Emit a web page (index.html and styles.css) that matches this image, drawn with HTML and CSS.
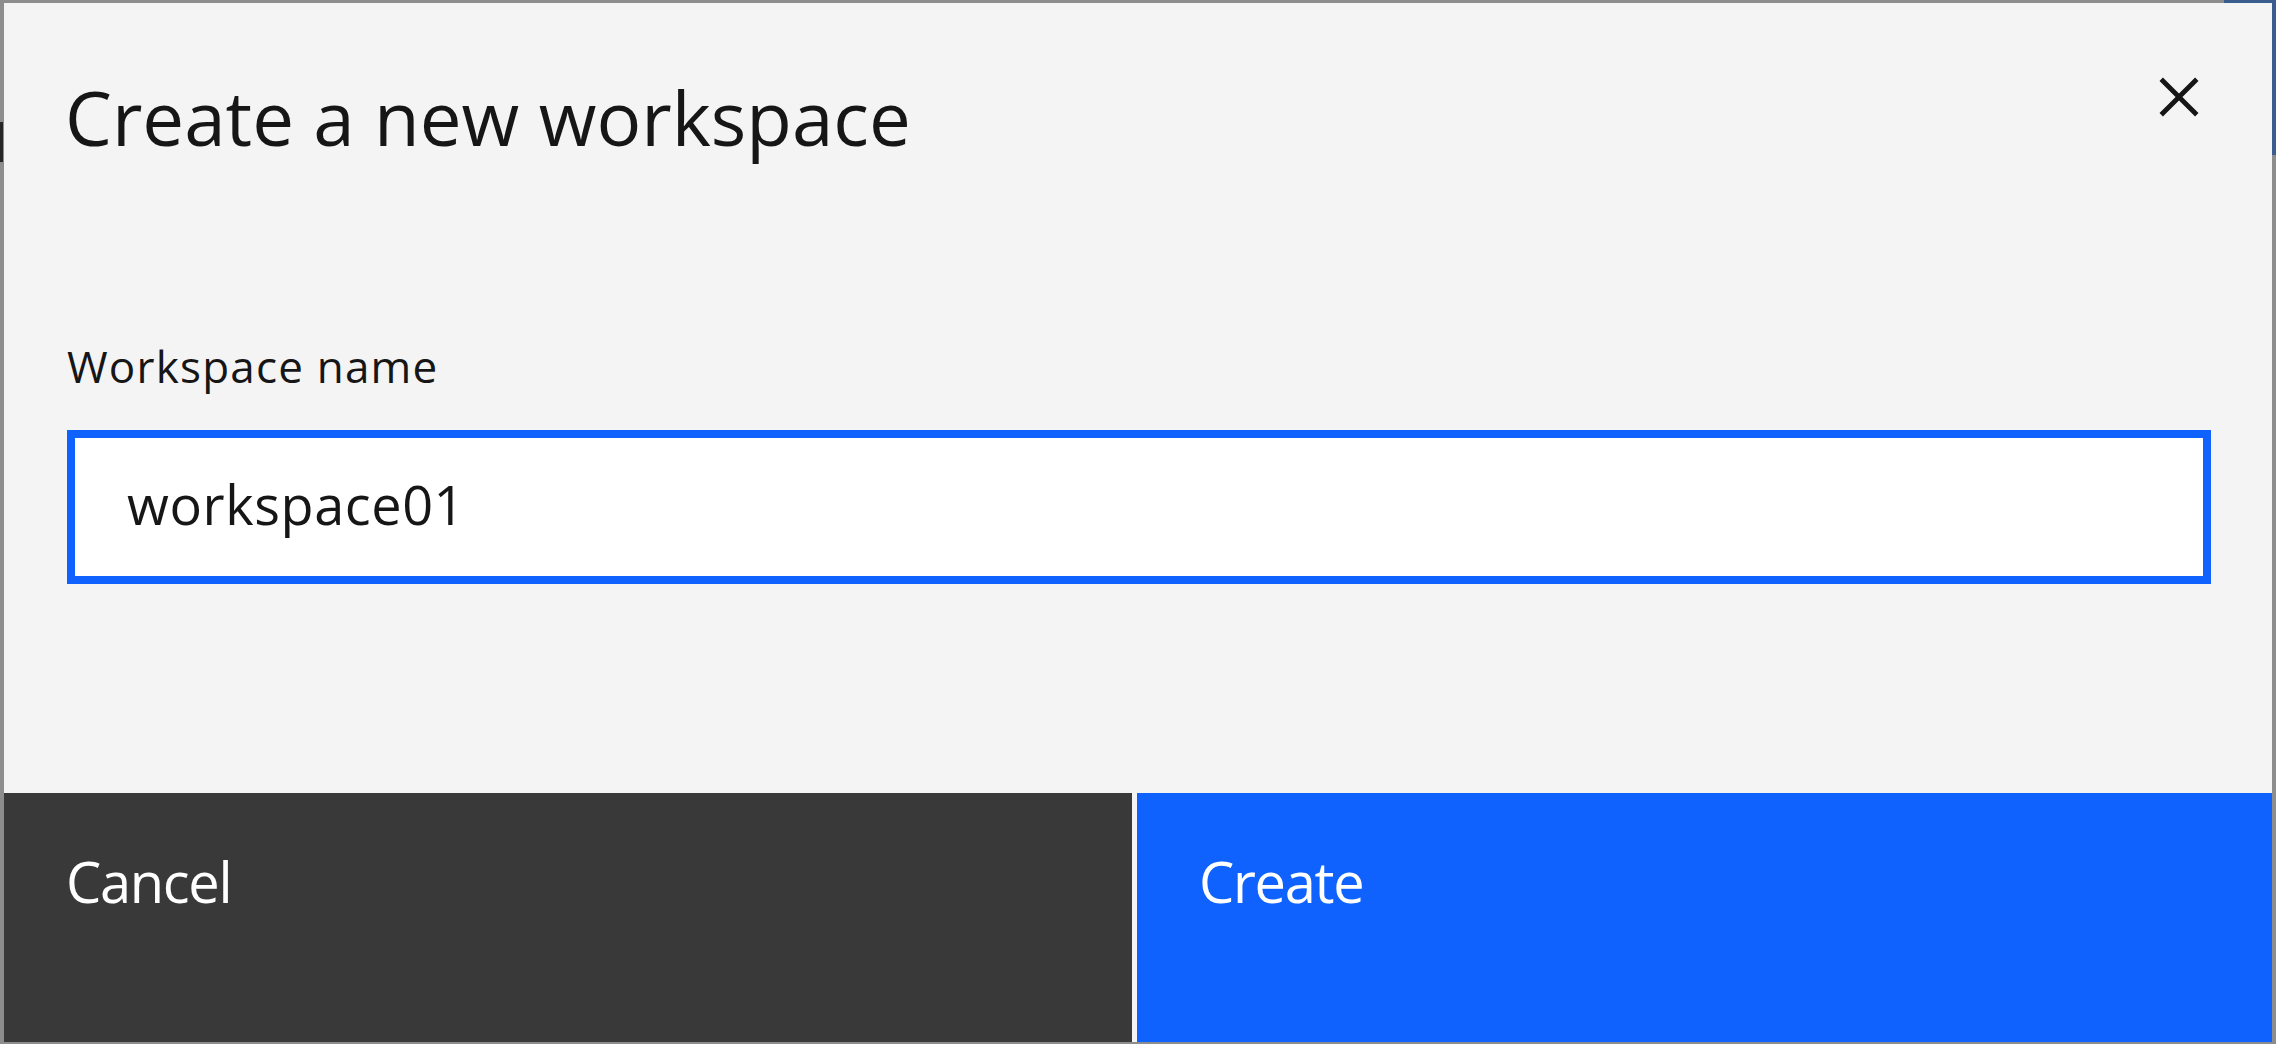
FILE: index.html
```html
<!DOCTYPE html>
<html lang="en">
<head>
<meta charset="utf-8">
<title>Create a new workspace</title>
<link rel="stylesheet" href="styles.css">
</head>
<body>
<div class="modal" role="dialog" aria-labelledby="modal-title">
  <div class="modal-header">
    <h2 class="modal-title" id="modal-title">Create a new workspace</h2>
    <button class="modal-close" type="button" aria-label="Close">
      <svg class="close-icon" viewBox="0 0 32 32" width="78" height="78" aria-hidden="true">
        <polygon points="24 9.4 22.6 8 16 14.6 9.4 8 8 9.4 14.6 16 8 22.6 9.4 24 16 17.4 22.6 24 24 22.6 17.4 16 24 9.4" fill="#161616"/>
      </svg>
    </button>
  </div>
  <div class="modal-body">
    <label class="field-label" for="ws-name">Workspace name</label>
    <input class="field-input" id="ws-name" type="text" value="workspace01">
  </div>
  <div class="modal-footer">
    <button class="btn btn-secondary" type="button"><span class="btn-text">Cancel</span></button>
    <button class="btn btn-primary" type="button"><span class="btn-text">Create</span></button>
  </div>
</div>
</body>
</html>
```
FILE: styles.css
```css
* {
  box-sizing: border-box;
}

html, body {
  margin: 0;
  padding: 0;
}

body {
  width: 2276px;
  height: 1044px;
  overflow: hidden;
  font-family: "Open Sans", "Liberation Sans", sans-serif;
  color: #161616;
  background:
    linear-gradient(#3b5d8e, #3b5d8e) no-repeat right top / 52px 155px,
    linear-gradient(#262626, #262626) no-repeat 0 122px / 3px 40px,
    #8d8d8d;
  padding: 3px 4px 2px 4px;
}

.modal {
  width: 2268px;
  height: 1039px;
  background: #f4f4f4;
  display: flex;
  flex-direction: column;
}

.modal-header {
  display: flex;
  justify-content: space-between;
  align-items: flex-start;
}

.modal-title {
  margin: 0;
  padding: 77px 0 0 61px;
  font-size: 74.5px;
  line-height: 75px;
  font-weight: 400;
  color: #161616;
}

.modal-close {
  width: 187px;
  height: 187px;
  border: 0;
  padding: 0;
  margin: 0;
  background: transparent;
  display: flex;
  align-items: center;
  justify-content: center;
  cursor: pointer;
}

.close-icon {
  display: block;
}

.modal-body {
  display: flex;
  flex-direction: column;
  align-items: flex-start;
  padding: 154px 61px 0 63px;
}

.field-label {
  display: block;
  font-size: 44px;
  line-height: 44px;
  letter-spacing: 1.2px;
  color: #161616;
}

.field-input {
  margin-top: 42px;
  width: 2144px;
  height: 154px;
  border: 8px solid #0f62fe;
  background: #ffffff;
  padding: 0 0 6px 52px;
  font-family: "Open Sans", "Liberation Sans", sans-serif;
  font-size: 54px;
  letter-spacing: 0.6px;
  color: #161616;
  outline: none;
  border-radius: 0;
}

.modal-footer {
  margin-top: auto;
  height: 249px;
  display: grid;
  grid-template-columns: 1128px 1fr;
  column-gap: 5px;
}

.btn {
  border: 0;
  margin: 0;
  padding: 60px 0 0 62px;
  display: flex;
  align-items: flex-start;
  justify-content: flex-start;
  font-family: "Open Sans", "Liberation Sans", sans-serif;
  font-size: 56px;
  line-height: 56px;
  letter-spacing: -1.3px;
  color: #ffffff;
  height: 249px;
  cursor: pointer;
}

.btn-text {
  display: block;
}

.btn-secondary {
  background: #393939;
}

.btn-primary {
  background: #0f62fe;
}
```
